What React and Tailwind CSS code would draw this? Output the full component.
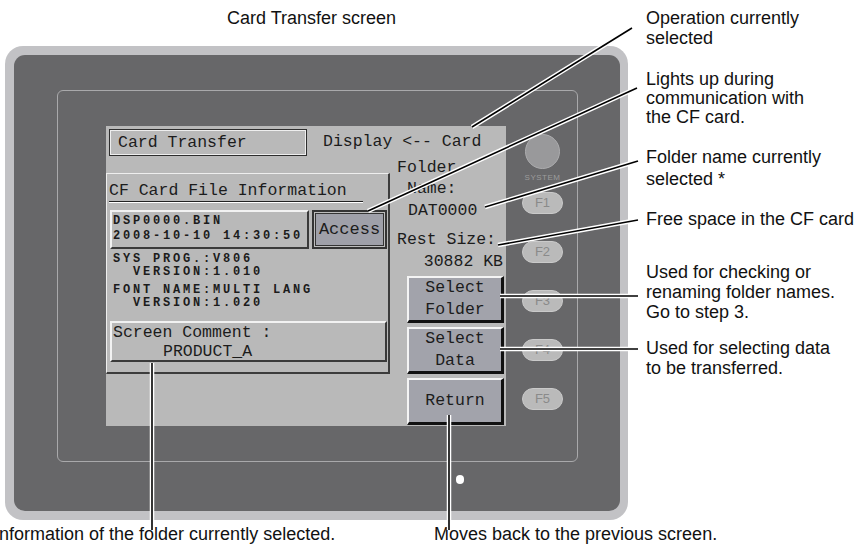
import React from 'react';

// Leader lines from the callout labels to the parts of the panel (x1, y1, x2, y2)
const leaders = [
  [472, 127, 632, 28],
  [368, 211, 637, 88],
  [485, 207, 638, 161],
  [498, 245, 638, 220],
  [500, 296, 638, 296],
  [500, 349, 638, 349],
  [152, 363, 152, 530],
  [449, 415, 449, 530],
];

// Callout texts around the device
const labels = [
  { pos: 'left-[227px] top-[8px] leading-[20px]', lines: ['Card Transfer screen'] },
  { pos: 'left-[646px] top-[8px] leading-[20px]', lines: ['Operation currently', 'selected'] },
  { pos: 'left-[646px] top-[70px] leading-[19px]', lines: ['Lights up during', 'communication with', 'the CF card.'] },
  { pos: 'left-[646px] top-[146px] leading-[22px]', lines: ['Folder name currently', 'selected *'] },
  { pos: 'left-[646px] top-[209px] leading-[20px]', lines: ['Free space in the CF card'] },
  { pos: 'left-[646px] top-[262px] leading-[20px]', lines: ['Used for checking or', 'renaming folder names.', 'Go to step 3.'] },
  { pos: 'left-[646px] top-[338px] leading-[20px]', lines: ['Used for selecting data', 'to be transferred.'] },
  { pos: 'left-[-6px] top-[524px] leading-[20px]', lines: ['Information of the folder currently selected.'] },
  { pos: 'left-[434px] top-[524px] leading-[20px]', lines: ['Moves back to the previous screen.'] },
];

const raised =
  'border-t-2 border-l-2 border-t-[#f2f2f2] border-l-[#f2f2f2] border-b-2 border-r-2 border-b-[#3a3a3a] border-r-[#3a3a3a]';

function ScreenButton({ lines }) {
  return (
    <div className="w-[97px] h-[47px] bg-[#a2a3ab] border-t-2 border-l-2 border-t-[#f4f4f4] border-l-[#f4f4f4] border-b-[3px] border-r-[3px] border-b-[#111] border-r-[#111] flex flex-col items-center justify-center leading-[22px]">
      {lines.map((l) => (
        <span key={l}>{l}</span>
      ))}
    </div>
  );
}

function FKey({ label, first }) {
  return (
    <div
      className={
        (first ? 'mt-[9px] ' : 'mt-[27px] ') +
        "w-[41px] h-[22px] rounded-full bg-[#bababa] border border-[#cacaca] flex items-center justify-center text-[13px] text-[#8a8a8a] font-['Liberation_Sans',Arial,sans-serif]"
      }
    >
      {label}
    </div>
  );
}

function Screen() {
  return (
    <div className="w-[400px] h-[300px] shrink-0 bg-[#b9b9b9] flex flex-col text-[#1c1c1c] text-[16.5px] font-['Liberation_Mono','DejaVu_Sans_Mono',monospace]">
      {/* Title row */}
      <div className="h-[31px] flex items-start">
        <div className="ml-[3px] mt-[3px] w-[198px] h-[27px] border border-[#2e2e2e] shadow-[inset_0_0_0_1px_#eeeeee] pl-[8px] leading-[25px]">
          Card Transfer
        </div>
        <div className="ml-[16px] mt-[3px] leading-[26px]">Display &lt;-- Card</div>
      </div>

      <div className="flex items-start">
        {/* CF card file information panel */}
        <div className="mt-[16px] w-[284px] h-[201px] border-t border-l border-t-[#eeeeee] border-l-[#eeeeee] border-b-2 border-r-2 border-b-[#3c3c3c] border-r-[#3c3c3c] flex flex-col">
          <div className="ml-[2px] mt-[7px] w-[254px] h-[21px] leading-[20px] border-b border-[#222] shadow-[0_1px_0_#ffffff]">
            CF Card File Information
          </div>

          <div className="mt-[8px] flex items-start">
            <div className={'ml-[3px] w-[199px] h-[39px] pl-[1px] pt-[2px] leading-[15px] text-[12px] font-bold tracking-[2.8px] ' + raised}>
              <div>DSP0000.BIN</div>
              <div>2008-10-10 14:30:50</div>
            </div>
            <div className="ml-[3px] w-[75px] h-[39px] border-2 border-[#343434] bg-[#9fa0a9] shadow-[inset_0_0_0_1px_#bdbdbd,inset_0_0_0_2px_#343434] flex items-center justify-center text-[17px]">
              Access
            </div>
          </div>

          <div className="mt-[4px] pl-[6px] text-[12px] leading-[13px] font-bold tracking-[2.8px] whitespace-pre">
            <div>SYS PROG.:V806</div>
            <div>{'  VERSION:1.010'}</div>
            <div className="mt-[5px]">FONT NAME:MULTI LANG</div>
            <div>{'  VERSION:1.020'}</div>
          </div>

          <div className={'mt-[11px] ml-[3px] w-[277px] h-[41px] pl-[1px] leading-[19px] ' + raised}>
            <div>Screen Comment :</div>
            <div className="pl-[50px]">PRODUCT_A</div>
          </div>
        </div>

        {/* Folder info and the three soft buttons */}
        <div className="ml-[7px] w-[109px] flex flex-col">
          <div className="h-[21px] leading-[21px]">Folder</div>
          <div className="h-[21px] leading-[21px] pl-[10px]">Name:</div>
          <div className="h-[24px] leading-[24px] pl-[11px]">DAT0000</div>
          <div className="mt-[6px] h-[22px] leading-[22px]">Rest Size:</div>
          <div className="h-[22px] leading-[22px] text-right pr-[3px]">30882 KB</div>
          <div className="mt-[3px] ml-[10px] flex flex-col gap-[4px]">
            <ScreenButton lines={['Select', 'Folder']} />
            <ScreenButton lines={['Select', 'Data']} />
            <ScreenButton lines={['Return']} />
          </div>
        </div>
      </div>
    </div>
  );
}

function FKeys() {
  return (
    <div className="ml-[16px] w-[41px] flex flex-col items-center">
      <div className="mt-[8px] w-[35px] h-[35px] rounded-full bg-[#99999b] border border-[#adadaf]" />
      <div className="mt-[4px] h-[10px] text-[8px] leading-[10px] text-[#9c9c9c] tracking-[0.5px] font-['Liberation_Sans',Arial,sans-serif]">
        SYSTEM
      </div>
      {['F1', 'F2', 'F3', 'F4', 'F5'].map((k, i) => (
        <FKey key={k} label={k} first={i === 0} />
      ))}
    </div>
  );
}

export default function App() {
  return (
    <div className="relative w-[863px] h-[553px] bg-white overflow-hidden font-['Liberation_Sans',Arial,sans-serif] text-[#111]">
      {/* The device: light outer bezel, dark front, thin inner frame, LCD */}
      <div className="pl-[5px] pt-[46px]">
        <div className="w-[623px] h-[474px] rounded-[18px] bg-[#c2c2c5] pt-[9px] pl-[9px]">
          <div className="w-[606px] h-[456px] rounded-[11px] bg-[#676769] pt-[35px] pl-[43px] flex flex-col">
            <div className="w-[521px] h-[372px] rounded-[6px] border border-[#a9a9ab] pt-[35px] pl-[48px] flex">
              <Screen />
              <FKeys />
            </div>
            <div className="ml-[399px] mt-[13px] w-[8px] h-[9px] rounded-full bg-white" />
          </div>
        </div>
      </div>

      {/* Callout labels */}
      {labels.map((l) => (
        <div key={l.lines[0]} className={'absolute text-[18px] whitespace-nowrap ' + l.pos}>
          {l.lines.map((t) => (
            <div key={t}>{t}</div>
          ))}
        </div>
      ))}

      {/* Leader lines on top */}
      <svg className="absolute left-0 top-0 pointer-events-none" width="863" height="553">
        {leaders.map(([x1, y1, x2, y2], i) => (
          <g key={i}>
            <line x1={x1} y1={y1} x2={x2} y2={y2} stroke="#ffffff" strokeWidth="4.5" />
            <line x1={x1} y1={y1} x2={x2} y2={y2} stroke="#000000" strokeWidth="1.6" />
          </g>
        ))}
      </svg>
    </div>
  );
}
